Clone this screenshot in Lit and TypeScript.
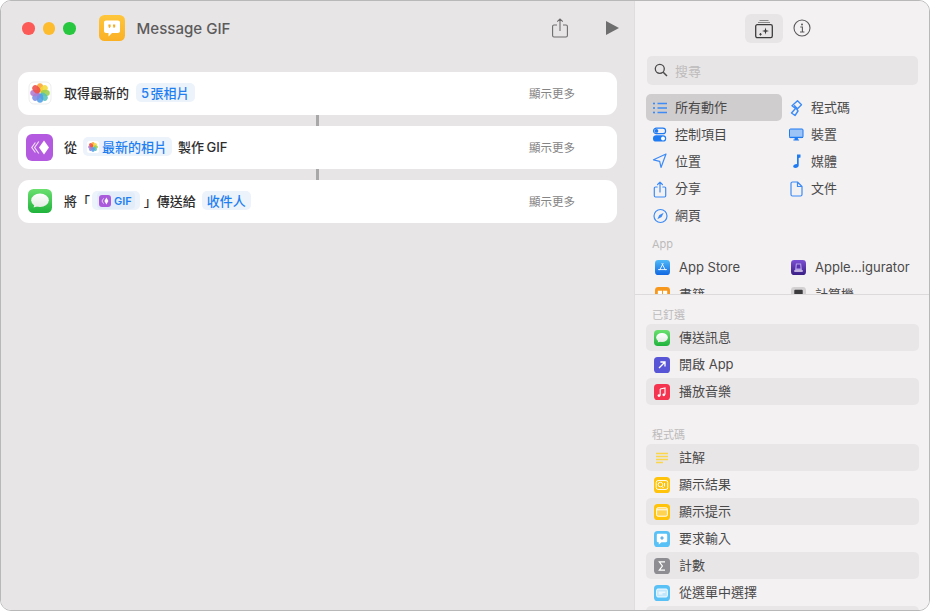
import { LitElement, css, html, svg } from 'lit';
import { customElement } from 'lit/decorators.js';

const BLUE = '#3c8bf6';

// photos flower, centred on 12,12 in a 24 box
const petals = ['#f9a533', '#f5d93a', '#9ccf4c', '#55c1b8', '#4f9ee8', '#7f8be0', '#b07ccf', '#ef5048'];
const flower = (r: number, d: number) =>
  petals.map(
    (c, i) => svg`<ellipse cx="12" cy="${12 - d}" rx="${r * 0.72}" ry="${r}" fill="${c}" opacity="0.88"
      transform="rotate(${i * 45} 12 12)"></ellipse>`
  );

const photosIcon = html`<svg viewBox="0 0 24 24" width="24" height="24">
  <rect x="1" y="1" width="22" height="22" rx="5" fill="#fff" stroke="#e3e1e2" stroke-width="0.6"></rect>
  ${flower(4.6, 5.2)}
</svg>`;

const miniPhotos = html`<svg viewBox="0 0 24 24" width="12" height="12">
  <rect width="24" height="24" rx="5" fill="#fff"></rect>${flower(4.8, 5.2)}
</svg>`;

const gifIcon = html`<svg viewBox="0 0 27 27" width="27" height="27">
  <rect width="27" height="27" rx="6" fill="#b35ae0"></rect>
  <path d="M18 6.5 23 13.5 18 20.5 13 13.5Z" fill="#fff"></path>
  <path d="M12.8 7.5 8.6 13.5 12.8 19.5M9.4 8.5 5.8 13.5 9.4 18.5" fill="none" stroke="#f0dcf9" stroke-width="1.2"></path>
</svg>`;

const miniGif = html`<svg viewBox="0 0 12 12" width="12" height="12">
  <rect width="12" height="12" rx="3" fill="#a95bdc"></rect>
  <path d="M7.4 2.6 9.4 6 7.4 9.4 5.4 6Z" fill="#fff"></path>
  <path d="M4.6 3.4 3 6 4.6 8.6" fill="none" stroke="#eeddf8" stroke-width="0.9"></path>
</svg>`;

const messagesIcon = (size: number) => html`<svg viewBox="0 0 24 24" width="${size}" height="${size}">
  <defs>
    <linearGradient id="msg" x1="0" y1="0" x2="0" y2="1">
      <stop offset="0" stop-color="#6be06f"></stop>
      <stop offset="1" stop-color="#1fb33c"></stop>
    </linearGradient>
    <linearGradient id="bub" x1="0" y1="0" x2="0" y2="1">
      <stop offset="0" stop-color="#fff"></stop>
      <stop offset="1" stop-color="#e4ebe4"></stop>
    </linearGradient>
  </defs>
  <rect width="24" height="24" rx="5.5" fill="url(#msg)"></rect>
  <path d="M6.6 15 5.6 18.6 10 17Z" fill="#eef2ee"></path>
  <ellipse cx="12" cy="11.3" rx="8.8" ry="6.8" fill="url(#bub)"></ellipse>
</svg>`;

const tile = (bg: string, body: unknown, size = 16) => html`<svg viewBox="0 0 16 16" width="${size}" height="${size}">
  <rect width="16" height="16" rx="3.6" fill="${bg}"></rect>${body}
</svg>`;

const line = (d: string, w = 1.2) =>
  html`<svg viewBox="0 0 20 20" width="20" height="20">
    <path d="${d}" fill="none" stroke="${BLUE}" stroke-width="${w}" stroke-linecap="round" stroke-linejoin="round"></path>
  </svg>`;

const catIcons: Record<string, unknown> = {
  list: html`<svg viewBox="0 0 20 20" width="20" height="20">
    <g fill="${BLUE}"><circle cx="4" cy="5.5" r="1.1"></circle><circle cx="4" cy="10" r="1.1"></circle><circle cx="4" cy="14.5" r="1.1"></circle></g>
    <path d="M7.5 5.500H17M7.5 10H17M7.5 14.500H17" stroke="${BLUE}" stroke-width="1.4"></path>
  </svg>`,
  controls: html`<svg viewBox="0 0 20 20" width="20" height="20">
    <rect x="3.6" y="3.1" width="12" height="5.6" rx="2.8" fill="none" stroke="#1f7bf2" stroke-width="1.2"></rect>
    <circle cx="6.4" cy="5.900" r="1.900" fill="#1f7bf2"></circle>
    <rect x="3" y="10.200" width="13.200" height="6.400" rx="3.200" fill="#1f7bf2"></rect>
    <circle cx="13" cy="13.400" r="2" fill="#fff"></circle>
  </svg>`,
  script: html`<svg viewBox="0 0 20 20" width="20" height="20">
    <path d="M11.500 2.700 15.500 6.700 11.500 10.700 8.500 7.700 12 13 9 17.500 5.500 15 9.500 10.500 6 7.700Z M8.500 7.700 11.500 10.700" fill="none" stroke="${BLUE}" stroke-width="1.400" stroke-linejoin="round"></path>
  </svg>`,
  device: html`<svg viewBox="0 0 20 20" width="20" height="20">
    <rect x="3.500" y="4" width="13.500" height="8.600" rx="1" fill="#9cc4f7" stroke="#1f7bf2" stroke-width="1"></rect>
    <path d="M3.500 11.800H17V13H3.500ZM8.600 13H11.900V14.600H8.600ZM7.400 14.600H13.100V15.500H7.400Z" fill="#1f7bf2"></path>
  </svg>`,
  location: line('M16 2 3.500 7.800 9.700 9.300 11 15.500Z'),
  music: html`<svg viewBox="0 0 20 20" width="20" height="20">
    <path d="M11 2.500H14.500V5.600L12.700 6V13.500C12.700 15 11.200 16 9.300 16 8 16 7.200 15.300 7.200 14.300 7.200 13 8.700 12.300 11 12V2.500Z" fill="#1f7bf2"></path>
  </svg>`,
  share: line('M7.200 8H5.500C4.800 8 4.300 8.500 4.300 9.200V16.800C4.300 17.500 4.800 18 5.500 18H14.500C15.200 18 15.700 17.500 15.700 16.800V9.200C15.700 8.500 15.200 8 14.500 8H12.800M10 13V3.300M7.600 5.500 10 3.100 12.400 5.500'),
  doc: line('M6.500 3H11.500L16 7.500V15.500C16 16.300 15.300 17 14.500 17H6.500C5.700 17 5 16.300 5 15.500V4.500C5 3.700 5.700 3 6.500 3ZM11.500 3V7.500H16'),
  compass: html`<svg viewBox="0 0 20 20" width="20" height="20">
    <circle cx="10.500" cy="10" r="6.500" fill="none" stroke="${BLUE}" stroke-width="1.200"></circle>
    <path d="M13.700 6.800 11.600 11.100 7.300 13.200 9.400 8.900Z" fill="${BLUE}"></path>
  </svg>`,
};

const categories = [
  ['所有動作', 'list', true],
  ['程式碼', 'script'],
  ['控制項目', 'controls'],
  ['裝置', 'device'],
  ['位置', 'location'],
  ['媒體', 'music'],
  ['分享', 'share'],
  ['文件', 'doc'],
  ['網頁', 'compass'],
] as [string, string, boolean?][];

const gradient = (id: string, from: string, to: string) => svg`<defs>
  <linearGradient id="${id}" x1="0" y1="0" x2="0" y2="1">
    <stop offset="0" stop-color="${from}"></stop><stop offset="1" stop-color="${to}"></stop>
  </linearGradient>
</defs>`;

const apps: [string, unknown][] = [
  ['App Store', tile('url(#as)', svg`${gradient('as', '#4fb9f8', '#1268e2')}<path d="M8.800 3.400 4.900 10.800M7.200 3.400 11.100 10.800M3.300 10.200H12.700" stroke="#fff" stroke-width="0.900" fill="none"></path>`, 15)],
  ['Apple...igurator', tile('url(#cfg)', svg`${gradient('cfg', '#7c4fd4', '#3a1f85')}<path d="M5.200 3.600H10.800L11.600 10.600H4.400Z" fill="#b7a2ea"></path><path d="M6.200 4.800H9.800L10.200 9H5.800Z" fill="#5a34b0"></path><rect x="3.400" y="10.800" width="9.200" height="1.700" rx="0.500" fill="#e6ddf8"></rect>`, 15)],
  ['書籍', tile('#f7981d', svg`<path d="M3 4H7.500V12H3ZM8.500 4H13V12H8.500Z" fill="#fff"></path>`, 15)],
  ['計算機', tile('#d3d1d2', svg`<rect x="3.500" y="3" width="9" height="10" rx="1" fill="#3b3a3c"></rect>`, 15)],
];

const pinned: [string, unknown][] = [
  ['傳送訊息', messagesIcon(16)],
  ['開啟 App', tile('#5856d6', svg`<path d="M5 11 11 5M6.400 5H11V9.600" stroke="#fff" stroke-width="1.300" fill="none"></path>`)],
  ['播放音樂', tile('#f5344f', svg`<path d="M6.200 5 11 4V10.400M6.200 5V11.400" stroke="#fff" stroke-width="1.100" fill="none"></path><circle cx="5" cy="11.600" r="1.400" fill="#fff"></circle><circle cx="9.800" cy="10.800" r="1.400" fill="#fff"></circle>`)],
];

const scripting: [string, unknown][] = [
  ['註解', html`<svg viewBox="0 0 16 16" width="16" height="16"><path d="M2 3.500H14M2 6.500H14M2 9.500H14M2 12.500H9" stroke="#fbd54a" stroke-width="1.300"></path></svg>`],
  ['顯示結果', tile('#fec30a', svg`<rect x="2.200" y="3.600" width="11.600" height="8.800" rx="1.800" fill="none" stroke="#fff" stroke-width="1"></rect><circle cx="6.400" cy="7.600" r="2.300" fill="none" stroke="#fff" stroke-width="1"></circle><path d="M8 9.400 9.500 11M10.500 6V9.500" stroke="#fff" stroke-width="1"></path>`)],
  ['顯示提示', tile('#fec30a', svg`<rect x="2.600" y="3.800" width="10.800" height="8.400" rx="1.400" fill="#ffd24f" stroke="#fff" stroke-width="1"></rect><path d="M3 5.800H13" stroke="#fff" stroke-width="1"></path>`)],
  ['要求輸入', tile('#5ac1f6', svg`<path d="M4 2.800H12C12.700 2.800 13.200 3.300 13.200 4V10C13.200 10.700 12.700 11.200 12 11.200H7.500L4.800 13.600V11.200H4C3.300 11.200 2.800 10.700 2.800 10V4C2.800 3.300 3.300 2.800 4 2.800Z" fill="#fff"></path><path d="M8 5.200V8.800M6.200 7H9.800" stroke="#3f9fe0" stroke-width="1.100"></path>`)],
  ['計數', tile('#8e8d92', svg`<path d="M11 3.800H5.300L8.400 8 5.300 12.200H11" fill="none" stroke="#fff" stroke-width="1.200"></path>`)],
  ['從選單中選擇', tile('#5ac1f6', svg`<rect x="2.600" y="4" width="10.800" height="8" rx="1.400" fill="#bfe6fb" stroke="#fff" stroke-width="0.900"></rect><path d="M4.600 7.200H11.400M4.600 8.900H8.500" stroke="#fff" stroke-width="1"></path>`)],
  ['', html``],
];

@customElement('app-root')
export class AppRoot extends LitElement {
  private card(icon: unknown, body: unknown) {
    return html`<div class="card">
      <span class="card-icon">${icon}</span>
      <div class="sentence">${body}</div>
      <span class="more">顯示更多</span>
    </div>`;
  }

  private rows(items: [string, unknown][]) {
    return html`<div class="rows">
      ${items.map(([label, icon]) => html`<div class="row">${icon}<span>${label}</span></div>`)}
    </div>`;
  }

  render() {
    return html`
      <div class="window">
        <main class="editor">
          <header class="titlebar">
            <div class="lights"><i class="red"></i><i class="amber"></i><i class="green"></i></div>
            <svg class="app-icon" viewBox="0 0 26 26" width="26" height="26">
              <defs>
                <linearGradient id="shortcut" x1="0" y1="0" x2="0" y2="1">
                  <stop offset="0" stop-color="#fec63c"></stop>
                  <stop offset="1" stop-color="#fbb024"></stop>
                </linearGradient>
              </defs>
              <rect width="26" height="26" rx="5.5" fill="url(#shortcut)"></rect>
              <path d="M7 5.500H19C20.100 5.500 21 6.400 21 7.500V16C21 17.100 20.100 18 19 18H13L9.500 21.500V18H7C5.900 18 5 17.100 5 16V7.500C5 6.400 5.900 5.500 7 5.500Z" fill="#fff"></path>
              <path d="M9.400 9.500H11.600V11.700L10.500 13.100H9.700L10.300 11.700H9.400ZM14 9.500H16.200V11.700L15.100 13.100H14.300L14.900 11.700H14Z" fill="#f5ad22"></path>
            </svg>
            <span class="title">Message GIF</span>
            <svg class="share" viewBox="0 0 16 20" width="16" height="20">
              <path d="M5 7H2C1.200 7 .6 7.600 .6 8.400V17.600C.6 18.400 1.200 19 2 19H14C14.800 19 15.400 18.400 15.400 17.600V8.400C15.400 7.600 14.800 7 14 7H11M8 13V1M5.200 3.600 8 .9 10.800 3.600" fill="none" stroke="#6d6c6d" stroke-width="1.100"></path>
            </svg>
            <svg class="play" viewBox="0 0 13 14" width="13" height="14"><path d="M0 0 13 7 0 14Z" fill="#6f6e6f"></path></svg>
          </header>
          <section class="flow">
            ${this.card(photosIcon, html`<span>取得最新的</span><span class="chip count">5 張相片</span>`)}
            <div class="link"></div>
            ${this.card(gifIcon, html`<span>從</span><span class="chip tight">${miniPhotos}最新的相片</span><span class="gif-label">製作 GIF</span>`)}
            <div class="link"></div>
            ${this.card(messagesIcon(24), html`<span>將「</span><span class="chip var"><span class="var-inner">${miniGif}GIF</span></span><span class="close">」傳送給</span><span class="chip">收件人</span>`)}
          </section>
        </main>
        <aside class="side">
          <div class="top">
            <div class="tabs">
              <div class="tab on">
                <svg viewBox="0 0 20 20" width="20" height="20">
                  <path d="M5.500 1.500H14.500M4 3.500H16" stroke="#8b8a8b" stroke-width="1"></path>
                  <rect x="1.700" y="5.700" width="16.600" height="13" rx="1.600" fill="none" stroke="#3d3c3d" stroke-width="1.300"></rect>
                  <path d="M11.500 8.500 12.300 11.200 15 12 12.300 12.800 11.500 15.500 10.700 12.800 8 12 10.700 11.200Z" fill="#3d3c3d"></path>
                  <path d="M6.500 14V16.600M5.200 15.300H7.800" stroke="#3d3c3d" stroke-width="0.900"></path>
                </svg>
              </div>
              <div class="tab info">
                <svg viewBox="0 0 18 18" width="18" height="18">
                  <circle cx="9" cy="9" r="8" fill="none" stroke="#5a595a" stroke-width="1.100"></circle>
                  <circle cx="9" cy="5.400" r="1" fill="#5a595a"></circle>
                  <path d="M7.300 8H9.400V12.800M7 13H11.400" fill="none" stroke="#5a595a" stroke-width="1.100"></path>
                </svg>
              </div>
            </div>
            <div class="search">
              <svg viewBox="0 0 14 14" width="14" height="14">
                <circle cx="5.800" cy="5.800" r="4.500" fill="none" stroke="#4c4b4c" stroke-width="1.300"></circle>
                <path d="M9.200 9.200 13 13" stroke="#4c4b4c" stroke-width="1.500"></path>
              </svg>
              <span>搜尋</span>
            </div>
            <div class="cats">
              ${categories.map(
                ([label, icon, on]) => html`<div class="cat ${on ? 'on' : ''}">${catIcons[icon]}<span>${label}</span></div>`
              )}
            </div>
            <h3 class="app-head">App</h3>
            <div class="apps">
              ${apps.map(([label, icon]) => html`<div class="app">${icon}<span>${label}</span></div>`)}
            </div>
          </div>
          <div class="bottom">
            <h3>已釘選</h3>
            ${this.rows(pinned)}
            <h3 class="next">程式碼</h3>
            ${this.rows(scripting)}
          </div>
        </aside>
      </div>
    `;
  }

  static styles = css`
    :host {
      display: block;
      width: 931px;
      height: 612px;
      background: #fff;
      font-family: Inter, 'Noto Sans CJK TC', sans-serif;
      font-size: 13px;
      color: #4a494a;
    }

    .window {
      box-sizing: border-box;
      width: 930px;
      height: 611px;
      display: flex;
      border: 1px solid #b9b8b8;
      border-radius: 11px;
      overflow: hidden;
    }

    .editor {
      box-sizing: border-box;
      width: 634px;
      background: #e8e5e6;
      border-right: 1px solid #dfdddd;
    }

    .titlebar {
      height: 70.6px;
      padding: 14px 0 0 21px;
      box-sizing: border-box;
      display: flex;
      align-items: flex-start;
    }

    .lights {
      display: flex;
      gap: 8px;
      margin-top: 7px;
    }

    .lights i {
      width: 12.5px;
      height: 12.5px;
      border-radius: 50%;
    }

    .red { background: #fc5a57; }
    .amber { background: #fdbb2e; }
    .green { background: #27c840; }

    .app-icon {
      margin-left: 23px;
    }

    .title {
      margin-left: 12px;
      line-height: 27px;
      font-size: 15.1px;
      font-weight: 500;
      color: #5c5b5c;
    }

    .share {
      margin: 3px 0 0 auto;
    }

    .play {
      margin: 6px 15px 0 38px;
    }

    .flow {
      padding: 0 17px;
      display: flex;
      flex-direction: column;
    }

    .card {
      height: 43.6px;
      background: #fff;
      border-radius: 11px;
      display: flex;
      align-items: center;
      padding: 0 42px 0 8px;
    }

    .card-icon {
      width: 27px;
      height: 27px;
      display: flex;
      align-items: center;
      justify-content: center;
      margin-right: 11px;
    }

    .sentence {
      display: flex;
      align-items: center;
      gap: 6px;
      font-weight: 500;
      color: #2f2e2f;
      flex: 1;
      padding-bottom: 1px;
    }

    .chip {
      display: inline-flex;
      align-items: center;
      gap: 3px;
      height: 19px;
      padding: 0 5px;
      border-radius: 5px;
      background: #edf3fb;
      color: #1f7ff0;
    }

    .chip.count {
      margin-left: 1px;
      word-spacing: -2px;
    }

    .chip.tight {
      padding: 0 5px 0 4px;
    }

    .gif-label {
      word-spacing: -1px;
    }

    .chip.var {
      margin-left: -4px;
    }

    .var-inner {
      display: flex;
      align-items: center;
      gap: 3px;
      height: 17px;
      padding: 0 3px 0 2px;
      border-radius: 4px;
      background: #e3edfa;
      font-size: 11px;
      font-weight: 600;
    }

    .close {
      margin-left: -2px;
    }

    .more {
      font-size: 11.5px;
      color: #858485;
      padding-bottom: 1px;
    }

    .link {
      align-self: center;
      width: 3px;
      height: 10.4px;
      background: #a9a8a9;
    }

    .side {
      flex: 1;
      min-width: 0;
      background: #f3f1f2;
      display: flex;
      flex-direction: column;
    }

    .top {
      height: 293px;
      overflow: hidden;
      padding: 0 10px 0 11px;
      border-bottom: 1px solid #dcdadb;
      flex: none;
    }

    .tabs {
      display: flex;
      justify-content: center;
      padding-top: 13px;
    }

    .tab {
      width: 38px;
      height: 29px;
      border-radius: 6px;
      display: flex;
      align-items: center;
      justify-content: center;
    }

    .tab.on {
      background: #e8e5e6;
    }

    .tab.info svg {
      margin: -2px 0 0 1px;
    }

    .search {
      margin: 13px 1px 9px;
      height: 29px;
      padding-bottom: 1px;
      box-sizing: border-box;
      border-radius: 5px;
      background: #e8e5e6;
      display: flex;
      align-items: center;
      gap: 7px;
      padding-left: 7px;
      color: #bdbbbc;
    }

    .cats,
    .apps {
      display: grid;
      grid-template-columns: 136px 136px;
      grid-auto-rows: 27px;
    }

    .cat {
      display: flex;
      align-items: center;
      gap: 5px;
      padding-left: 4px;
      border-radius: 5px;
    }

    .cat span,
    .app span,
    .row span {
      padding-bottom: 2px;
    }

    .cat.on {
      background: #d0cdce;
    }

    h3 {
      margin: 0;
      height: 20px;
      font-size: 11px;
      font-weight: 400;
      line-height: 22px;
      color: #bcbabb;
      padding-left: 6px;
    }

    .app-head {
      margin-top: 5px;
      line-height: 20px;
    }

    .app {
      display: flex;
      align-items: center;
      gap: 9px;
      padding-left: 9px;
    }

    .bottom {
      flex: 1;
      min-height: 0;
      overflow: hidden;
      padding: 9px 10px 0 11px;
    }

    .next {
      margin-top: 19px;
    }

    .row {
      height: 27px;
      display: flex;
      align-items: center;
      gap: 9px;
      padding-left: 8px;
      border-radius: 5px;
    }

    .row:nth-child(odd) {
      background: #e9e6e7;
    }
  `;
}

declare global {
  interface HTMLElementTagNameMap {
    'app-root': AppRoot;
  }
}
